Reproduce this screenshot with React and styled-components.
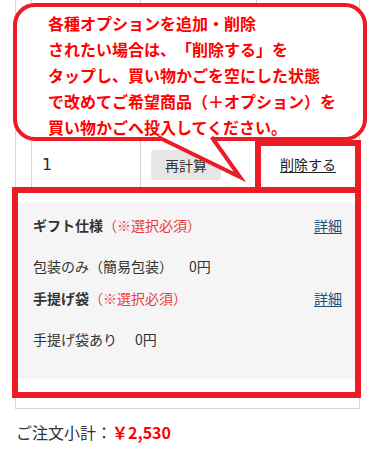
import React from 'react';
import styled, { createGlobalStyle } from 'styled-components';

const GlobalStyle = createGlobalStyle`
  * { box-sizing: border-box; }
  body {
    margin: 0;
    background: #ffffff;
    font-family: 'Noto Sans CJK JP', 'Noto Sans', sans-serif;
    color: #333;
    text-spacing-trim: space-all;
  }
`;

const RED = '#ec1c24';

const Page = styled.div`
  position: relative;
  width: 375px;
  padding: 0 15px;
`;

const Bubble = styled.div`
  position: absolute;
  left: 13px;
  top: 3px;
  width: 354px;
  height: 138px;
  border: 4px solid ${RED};
  border-radius: 22px;
  background: #ffffff;
  padding: 3px 0 0 31px;
  z-index: 3;
  color: #ff0000;
  font-size: 16px;
  font-weight: 700;
  line-height: 26px;
  white-space: nowrap;
`;

const Tail = styled.svg`
  position: absolute;
  left: 150px;
  top: 130px;
  z-index: 4;
  overflow: visible;
`;

const Table = styled.div`
  width: 345px;
`;

const Row = styled.div`
  display: grid;
  grid-template-columns: 16px 109px 116px 1fr;
  height: ${(p) => p.$h}px;
  border-right: 1px solid #d6d6d6;
`;

const Cell = styled.div`
  position: relative;
  border-left: 1px solid #d6d6d6;
  display: flex;
  align-items: center;
  padding-left: ${(p) => p.$pl || 0}px;
  justify-content: ${(p) => (p.$center ? 'center' : 'flex-start')};
`;

const Frame = styled.div`
  position: absolute;
  left: ${(p) => p.$l}px;
  top: ${(p) => p.$t}px;
  right: ${(p) => p.$r}px;
  bottom: ${(p) => p.$b}px;
  border: ${(p) => p.$w}px solid ${RED};
  pointer-events: none;
  z-index: 2;
`;

const Qty = styled.span`
  font-size: 16px;
  color: #1b2a4e;
  font-family: 'DejaVu Sans', 'Noto Sans', sans-serif;
`;

const RecalcButton = styled.button`
  height: 30px;
  padding: 0 14px;
  border: none;
  border-radius: 4px;
  background: #e6e6e6;
  color: #333;
  font-family: inherit;
  font-size: 14px;
  margin-top: 1px;
`;

const LinkText = styled.a`
  font-size: 14px;
  color: ${(p) => p.$color || '#222'};
  text-decoration: underline;
  text-underline-offset: 2px;
  cursor: pointer;
`;

const OptionsCell = styled.div`
  position: relative;
  border: 1px solid #d6d6d6;
  border-top: none;
  padding: 11px 1px 29px;
`;

const OptionsPanel = styled.div`
  background: #f5f5f5;
  padding: 12px 16px 30px;
  display: flex;
  flex-direction: column;
  gap: 12px;
`;

const Group = styled.div`
  display: flex;
  flex-direction: column;
  gap: 21px;
`;

const GroupHead = styled.div`
  display: flex;
  justify-content: space-between;
  align-items: center;
  height: 20px;
`;

const GroupTitle = styled.div`
  font-size: 14px;
  font-weight: 700;
  color: #333;
`;

const Required = styled.span`
  font-weight: 400;
  color: #ee3b3b;
`;

const Choice = styled.div`
  font-size: 14px;
  line-height: 20px;
  color: #333;
`;

const Price = styled.span`
  margin-left: ${(p) => p.$gap}px;
`;

const Subtotal = styled.div`
  margin-top: 11px;
  padding-left: 1px;
  font-size: 16px;
  line-height: 24px;
  color: #333;
`;

const SubtotalValue = styled.span`
  color: #ff0000;
  font-weight: 700;
`;

const groups = [
  { title: 'ギフト仕様', choice: '包装のみ（簡易包装）', price: '0円', gap: 16 },
  { title: '手提げ袋', choice: '手提げ袋あり', price: '0円', gap: 18 },
];

export default function App() {
  return (
    <>
      <GlobalStyle />
      <Page>
        <Bubble>
          各種オプションを追加・削除<br />
          されたい場合は、「削除する」を<br />
          タップし、買い物かごを空にした状態<br />
          で改めてご希望商品（＋オプション）を<br />
          買い物かごへ投入してください。
        </Bubble>
        <Tail width="100" height="50" viewBox="0 0 100 50">
          <polygon points="8,7 90,47 61.6,7" fill="#ffffff" />
          <polyline
            points="8,7 90,47 61.6,7"
            fill="none"
            stroke={RED}
            strokeWidth="4"
            strokeLinejoin="miter"
            strokeMiterlimit="12"
          />
        </Tail>
        <Table>
          <Row $h={136}>
            <Cell />
            <Cell />
            <Cell />
            <Cell />
          </Row>
          <Row $h={56}>
            <Cell />
            <Cell $pl={10}>
              <Qty>1</Qty>
            </Cell>
            <Cell $pl={10}>
              <RecalcButton>再計算</RecalcButton>
            </Cell>
            <Cell $center>
              <LinkText>削除する</LinkText>
              <Frame $l={-2} $t={4} $r={-2} $b={-1} $w={6} />
            </Cell>
          </Row>
          <OptionsCell>
            <OptionsPanel>
              {groups.map((g) => (
                <Group key={g.title}>
                  <GroupHead>
                    <GroupTitle>
                      {g.title}
                      <Required>（※選択必須）</Required>
                    </GroupTitle>
                    <LinkText $color="#1c4f7c">詳細</LinkText>
                  </GroupHead>
                  <Choice>
                    {g.choice}
                    <Price $gap={g.gap}>{g.price}</Price>
                  </Choice>
                </Group>
              ))}
            </OptionsPanel>
            <Frame $l={-4} $t={-5} $r={-2} $b={10} $w={6} />
          </OptionsCell>
        </Table>
        <Subtotal>
          ご注文小計：<SubtotalValue>￥2,530</SubtotalValue>
        </Subtotal>
      </Page>
    </>
  );
}
